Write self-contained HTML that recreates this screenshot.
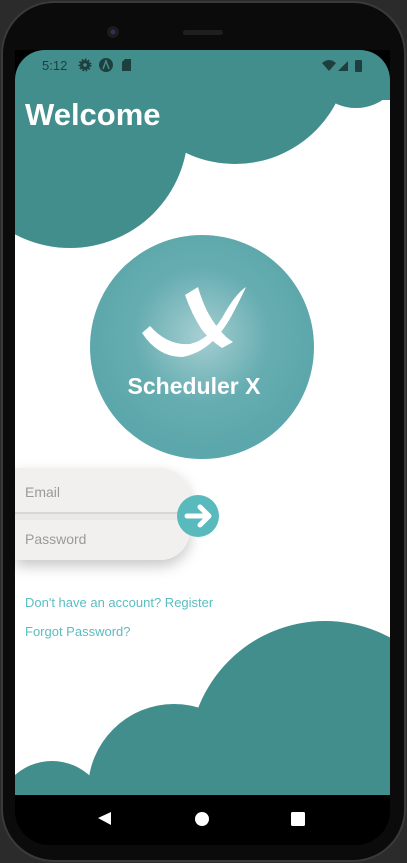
<!DOCTYPE html>
<html><head><style>
html,body{margin:0;padding:0;width:407px;height:863px;overflow:hidden;background:#2b2b2b;font-family:"Liberation Sans",sans-serif}
</style></head><body>
<svg width="407" height="863" viewBox="0 0 407 863" style="position:absolute;left:0;top:0">
<defs>
<radialGradient id="lg" cx="0.5" cy="0.45" r="0.5">
<stop offset="0" stop-color="#a6cfd2"/><stop offset="0.6" stop-color="#66adb1"/><stop offset="1" stop-color="#5ca7ab"/>
</radialGradient>
<filter id="sh" x="-20%" y="-20%" width="140%" height="160%"><feDropShadow dx="0" dy="6" stdDeviation="7" flood-color="#000" flood-opacity="0.22"/></filter>
<clipPath id="scr"><rect x="15" y="50" width="375" height="745"/></clipPath>
</defs>
<rect x="2" y="2" width="403" height="859" rx="52" fill="#0b0b0c" stroke="#3a3a3a" stroke-width="2"/>
<rect x="15" y="50" width="375" height="795" rx="34" fill="#000"/>
<g clip-path="url(#scr)">
<rect x="15" y="50" width="375" height="745" fill="#fff"/>
<path d="M15 50 H390 V100 H15Z" fill="#418e8c"/>
<circle cx="70" cy="130" r="118" fill="#418e8c"/>
<circle cx="235" cy="50" r="114" fill="#418e8c"/>
<circle cx="356" cy="60" r="48" fill="#418e8c"/>
<rect x="15" y="50" width="200" height="100" fill="#418e8c"/>
<circle cx="325" cy="757" r="136" fill="#418e8c"/>
<circle cx="174" cy="790" r="86" fill="#418e8c"/>
<circle cx="52" cy="817" r="56" fill="#418e8c"/>
</g>
<path d="M15 50 H45 A30 30 0 0 0 15 80Z M390 50 H360 A30 30 0 0 1 390 80Z" fill="#000"/>
<circle cx="113" cy="32" r="6" fill="#1b1b20"/><circle cx="113" cy="32" r="2.5" fill="#2a3450"/>
<rect x="183" y="30" width="40" height="5" rx="2.5" fill="#1f1f22"/>
<circle cx="202" cy="347" r="112" fill="url(#lg)"/>
<path d="M142 333 L150 326 Q168 346 190 344 Q208 340 222 318 Q235 294 246 287 Q242 296 232 315 Q212 352 182 357 Q158 357 142 333Z" fill="#fff"/>
<path d="M185 295 L198 287 Q205 312 218 328 Q226 338 233 342 L222 348 Q210 340 202 330 Q192 315 185 295Z" fill="#fff"/>
<text x="194" y="394" text-anchor="middle" font-family="Liberation Sans" font-weight="bold" font-size="23" fill="#fff">Scheduler X</text>
<g filter="url(#sh)"><path d="M15 468 H160 A30 30 0 0 1 190 498 V530 A30 30 0 0 1 160 560 H15Z" fill="#f1f0ef"/></g>
<rect x="15" y="512" width="175" height="2" fill="#d8d7d6"/>
<rect x="15" y="514" width="175" height="6" fill="#e6e5e4" opacity="0.7"/>
<text x="25" y="497" font-size="14" fill="#9a9a9a">Email</text>
<text x="25" y="544" font-size="14" fill="#9a9a9a">Password</text>
<circle cx="198" cy="516" r="21" fill="#59babd"/>
<path d="M187 516 H208 M200 507 L209 516 L200 525" stroke="#fff" stroke-width="5" fill="none" stroke-linecap="round" stroke-linejoin="round"/>
<text x="25" y="607" font-size="13" fill="#5bbdc0">Don't have an account? Register</text>
<text x="25" y="636" font-size="13" fill="#5bbdc0">Forgot Password?</text>
<text x="42" y="70" font-size="13" fill="#1f3f3e">5:12</text>
<circle cx="85" cy="65" r="5" fill="#1f3f3e"/><circle cx="85" cy="65" r="5.5" fill="none" stroke="#1f3f3e" stroke-width="2" stroke-dasharray="1.6 1.6"/><circle cx="85" cy="65" r="1.8" fill="#418e8c"/>
<circle cx="106" cy="65" r="7" fill="#1f3f3e"/><path d="M103 69 L106 61 L109 69" stroke="#418e8c" stroke-width="1.5" fill="none"/>
<path d="M125 59 H131 V71 H122 V62Z" fill="#1f3f3e"/>
<path d="M322 63 Q329 57 336 63 L329 71Z" fill="#1f3f3e"/>
<path d="M338 71 L348 61 V71Z" fill="#1f3f3e"/>
<rect x="355" y="60" width="7" height="12" rx="1" fill="#1f3f3e"/>
<text x="25" y="125" font-size="31" font-weight="bold" fill="#fff">Welcome</text>
<path d="M111 812 L98 818 L111 825Z" fill="#fff"/>
<circle cx="202" cy="819" r="7" fill="#fff"/>
<rect x="291" y="812" width="14" height="14" rx="1.5" fill="#fff"/>
</svg>
</body></html>
